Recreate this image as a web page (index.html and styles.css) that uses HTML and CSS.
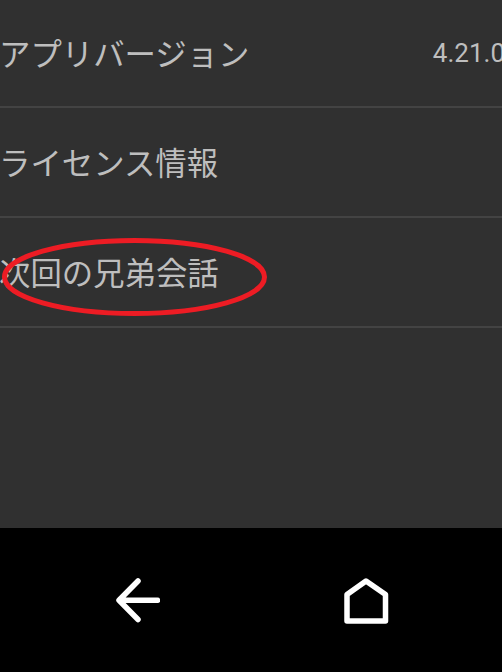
FILE: index.html
```html
<!DOCTYPE html>
<html lang="ja">
<head>
    <meta charset="UTF-8">
    <meta name="viewport" content="width=device-width, initial-scale=1.0">
    <title>設定</title>
    <link rel="stylesheet" href="styles.css">
</head>
<body>
    <ul class="settings">
        <li class="row"><span class="label">アプリバージョン</span><span class="version">4.21.0</span></li>
        <li class="row"><span class="label">ライセンス情報</span></li>
        <li class="row">
            <span class="label">次回の兄弟会話</span>
            <svg class="marker" width="270" height="82" viewBox="0 0 270 82">
                <ellipse cx="134.5" cy="41" rx="130" ry="36.5"/>
            </svg>
        </li>
    </ul>

    <div class="navbar">
        <svg class="nav-icon" width="48" height="48" viewBox="0 0 48 48">
            <path d="M45.5 24.3H8M26 5L7 24.3 26 43.5"/>
        </svg>
        <svg class="nav-icon" width="48" height="48" viewBox="0 0 48 48">
            <path d="M5 45V18.5L24 5l19.500 13.500V45z"/>
        </svg>
    </div>
</body>
</html>
```
FILE: styles.css
```css
* { box-sizing: border-box; }
body { margin: 0; height: 672px; display: flex; flex-direction: column; overflow: hidden; background-color: #303030; color: #bebebe; font-family: Roboto, "Noto Sans CJK JP", sans-serif; }
.settings { flex: 1; margin: 0; padding: 0; list-style: none; }
.row { position: relative; display: flex; justify-content: space-between; align-items: center; height: 110px; padding-bottom: 2px; border-bottom: 2px solid #434343; white-space: nowrap; }
.row:first-child { height: 108px; }
.label { margin-left: -1px; font-size: 31.4px; }
.version { margin-right: -3px; padding-top: 2px; font-size: 26px; }
.marker { position: absolute; left: 0; top: 18px; fill: none; stroke: #ed1c24; stroke-width: 5; }
.navbar { display: flex; justify-content: space-between; align-items: center; height: 144px; padding: 0 112px; background-color: #000; }
.nav-icon { fill: none; stroke: #fff; stroke-width: 5.5; stroke-linecap: round; stroke-linejoin: round; }
```
